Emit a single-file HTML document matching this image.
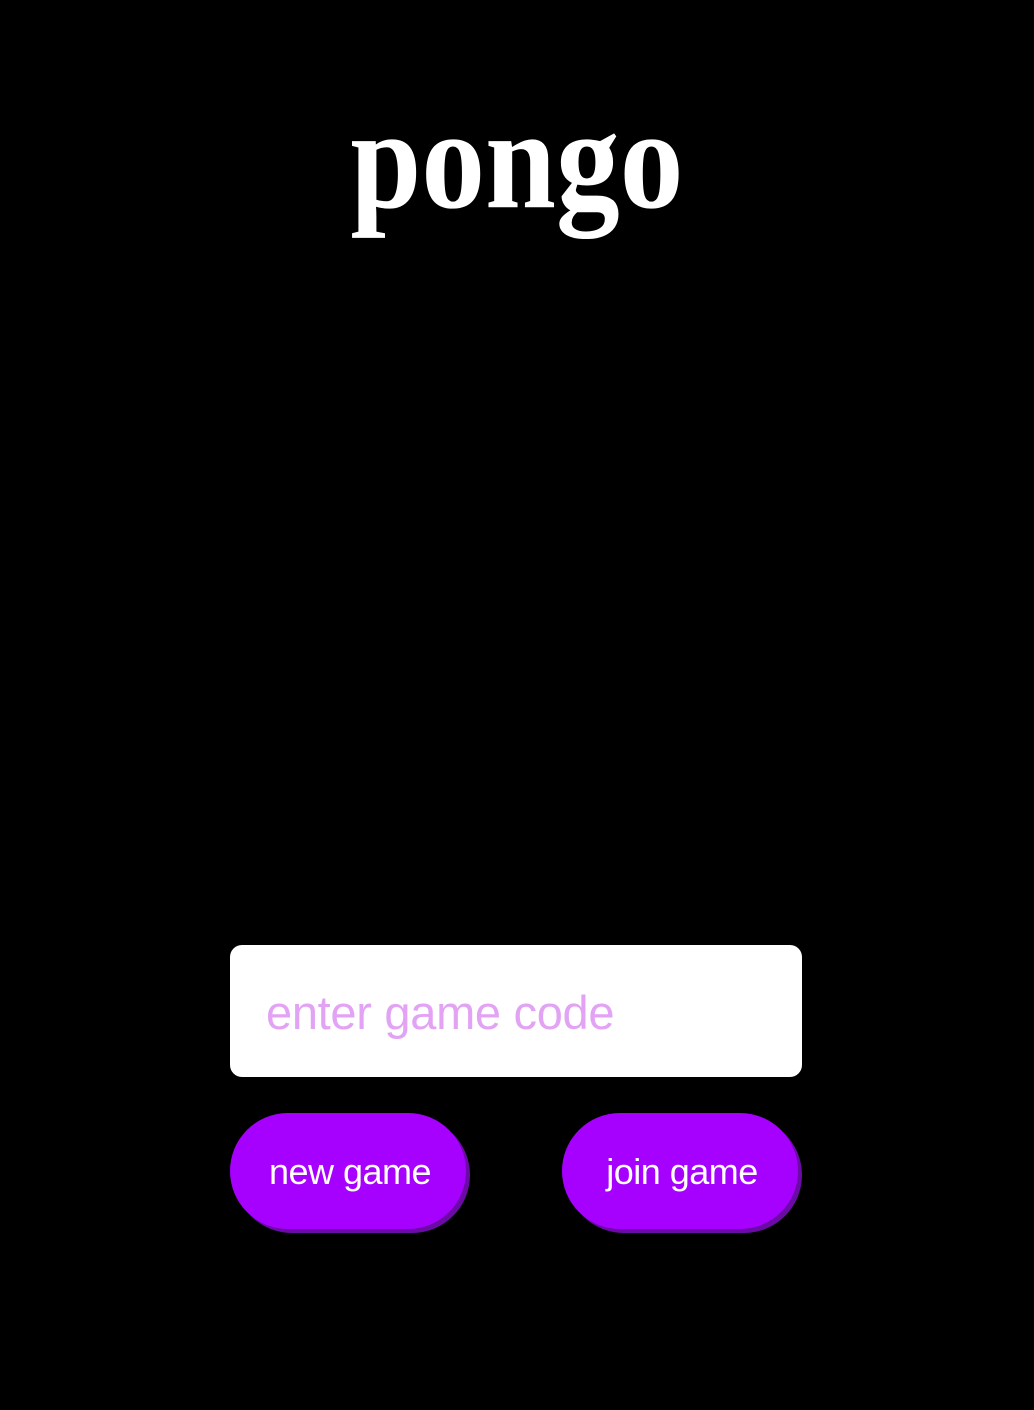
<!DOCTYPE html>
<html><head><style>
html,body{margin:0;padding:0;background:#000;width:1034px;height:1410px;overflow:hidden;position:relative;font-family:"Liberation Sans",sans-serif}
.t{position:absolute;left:0;width:1034px;top:70px;text-align:center;font-family:"Liberation Serif",serif;font-weight:bold;color:#fff;font-size:150px;line-height:180px}
.t span{display:inline-block;transform:scale(0.85,0.96);transform-origin:50% 40%}
.in{position:absolute;left:230px;top:945px;width:572px;height:132px;background:#fff;border-radius:12px}
.in span{position:absolute;left:36px;top:42px;font-size:47px;line-height:52px;color:#e3a3f5;letter-spacing:-0.3px}
.b{position:absolute;top:1113px;width:236px;height:116px;border-radius:58px;background:#a600ff;box-shadow:4px 4px 0 #6c0aa6;color:#fff;font-size:36px;line-height:118px;text-align:center;letter-spacing:-0.5px;text-indent:4px}
</style></head><body>
<div class="t"><span>pongo</span></div>
<div class="in"><span>enter game code</span></div>
<div class="b" style="left:230px">new game</div>
<div class="b" style="left:562px">join game</div>
</body></html>
